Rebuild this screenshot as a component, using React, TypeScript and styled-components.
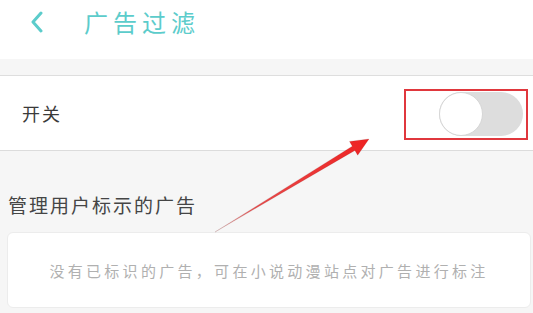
import React from 'react';
import styled, { createGlobalStyle } from 'styled-components';

const GlobalStyle = createGlobalStyle`
  html, body {
    margin: 0;
    padding: 0;
    background: #f6f6f6;
  }
  body {
    font-family: "Noto Sans CJK SC", "Noto Sans", sans-serif;
  }
`;

const Page = styled.div`
  position: relative;
  width: 533px;
  height: 313px;
  overflow: hidden;
  background: #f6f6f6;
`;

const Header = styled.div`
  display: flex;
  align-items: center;
  height: 59px;
  padding: 0 0 16px 28px;
  box-sizing: border-box;
  background: #fff;
`;

const BackButton = styled.button`
  display: flex;
  align-items: center;
  justify-content: center;
  width: 18px;
  height: 26px;
  padding: 0;
  border: none;
  background: none;
`;

const Title = styled.h1`
  margin: 0 0 0 38px;
  font-size: 24px;
  font-weight: 400;
  letter-spacing: 5px;
  color: #5ccccb;
`;

const Spacer = styled.div`
  height: 16px;
  border-bottom: 1px solid #dedede;
`;

const SwitchRow = styled.div`
  display: flex;
  align-items: center;
  justify-content: space-between;
  height: 74px;
  padding: 0 5px 0 22px;
  background: #fff;
  border-bottom: 1px solid #dcdcdc;
`;

const RowLabel = styled.span`
  font-size: 18px;
  letter-spacing: 2px;
  color: #3a3a3a;
`;

const HighlightBox = styled.div`
  display: flex;
  align-items: center;
  justify-content: flex-end;
  width: 124px;
  height: 51px;
  padding-right: 3px;
  box-sizing: border-box;
  border: 2px solid #e0373d;
  margin-top: 2px;
`;

const Track = styled.div<{ $on: boolean }>`
  position: relative;
  width: 84px;
  height: 44px;
  border-radius: 22px;
  background: ${p => (p.$on ? '#5ccccb' : '#dddddd')};
`;

const Knob = styled.div<{ $on: boolean }>`
  position: absolute;
  top: 0;
  left: ${p => (p.$on ? '40px' : '0')};
  width: 44px;
  height: 44px;
  border-radius: 50%;
  box-sizing: border-box;
  background: #fff;
  border: 1px solid #d6d6d6;
`;

const SectionTitle = styled.h2`
  margin: 40px 0 0 8px;
  font-size: 19px;
  font-weight: 400;
  letter-spacing: 2px;
  color: #454545;
`;

const Card = styled.div`
  display: flex;
  align-items: center;
  justify-content: center;
  margin: 14px 2px 0 7px;
  height: 74px;
  border-radius: 6px;
  border: 1px solid #ececec;
  background: #fff;
`;

const EmptyText = styled.span`
  font-size: 15px;
  letter-spacing: 3.3px;
  color: #b0b0b0;
`;

const ArrowOverlay = styled.svg`
  position: absolute;
  left: 0;
  top: 0;
  pointer-events: none;
`;

const Switch = ({ on }: { on: boolean }) => (
  <Track $on={on}>
    <Knob $on={on} />
  </Track>
);

export default function App() {
  return (
    <Page>
      <GlobalStyle />
      <Header>
        <BackButton>
          <svg width="14" height="22" viewBox="0 0 14 22">
            <path
              d="M11 2 L3 11 L11 20"
              fill="none"
              stroke="#5ccccb"
              strokeWidth="3"
              strokeLinecap="round"
              strokeLinejoin="round"
            />
          </svg>
        </BackButton>
        <Title>广告过滤</Title>
      </Header>
      <Spacer />
      <SwitchRow>
        <RowLabel>开关</RowLabel>
        <HighlightBox>
          <Switch on={false} />
        </HighlightBox>
      </SwitchRow>
      <SectionTitle>管理用户标示的广告</SectionTitle>
      <Card>
        <EmptyText>没有已标识的广告，可在小说动漫站点对广告进行标注</EmptyText>
      </Card>
      {/* annotation arrow pointing at the switch */}
      <ArrowOverlay width="533" height="313" viewBox="0 0 533 313">
        <defs>
          <linearGradient id="shaft" x1="216" y1="231" x2="369" y2="139" gradientUnits="userSpaceOnUse">
            <stop offset="0" stopColor="#f2b5b5" />
            <stop offset="0.25" stopColor="#e84a4a" />
            <stop offset="1" stopColor="#ee2222" />
          </linearGradient>
        </defs>
        <polygon
          points="215,232 352.3,146.2 349.5,141.4 369,139 357.7,155.2 354.9,150.4"
          fill="url(#shaft)"
          stroke="rgba(120,40,40,0.25)"
          strokeWidth="0.6"
          strokeLinejoin="round"
        />
      </ArrowOverlay>
    </Page>
  );
}
